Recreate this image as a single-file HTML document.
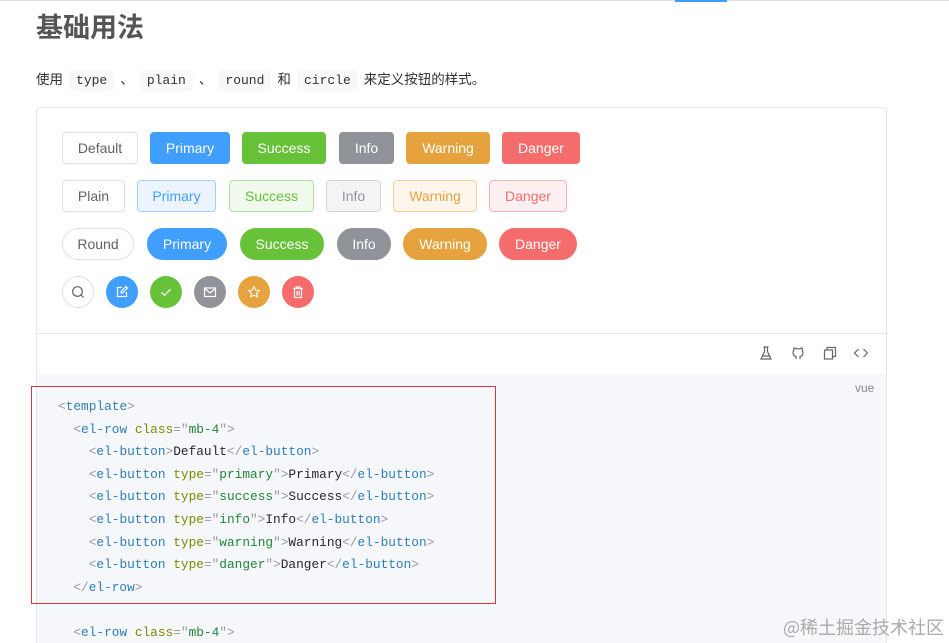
<!DOCTYPE html>
<html style="width:949px;height:643px;overflow:hidden"><head><meta charset="utf-8"><style>
*{box-sizing:border-box;margin:0;padding:0}
body{width:949px;height:643px;overflow:hidden;background:#fff;font-family:"Liberation Sans","Noto Sans CJK SC",sans-serif;position:relative}
.topline{position:absolute;left:0;top:0;width:949px;height:1px;background:#dcdfe6}
.topblue{position:absolute;left:675px;top:0;width:52px;height:2px;background:#409eff}
h1{position:absolute;left:36px;top:6px;font-size:27px;font-weight:700;color:#555;font-family:"Noto Sans CJK SC",sans-serif}
.desc{position:absolute;left:36px;top:66px;font-size:13.5px;color:#303133;font-family:"Noto Sans CJK SC",sans-serif;line-height:24px}
.desc code{font-family:"Liberation Mono",monospace;font-size:13px;background:#f7f8fa;padding:3px 7px;margin:0 3px;border-radius:4px;color:#333}
.box{position:absolute;left:36px;top:107px;width:851px;height:536px;border:1px solid #e4e7ed;border-bottom:none;border-radius:4px 4px 0 0}
.div1{position:absolute;left:37px;top:333px;width:849px;height:1px;background:#e4e7ed}
.code{position:absolute;left:37px;top:374px;width:849px;height:269px;background:#f5f7fa}
.b{position:absolute;height:32px;line-height:30px;font-size:14px;text-align:center;border:1px solid;border-radius:4px;color:#fff}
.c{position:absolute;width:32px;height:32px;border-radius:50%;top:276px;display:flex;align-items:center;justify-content:center}
pre{position:absolute;left:58px;top:396px;font-family:"Liberation Mono",monospace;font-size:12.8px;line-height:22.6px;color:#24292e}
.t{color:#2d7fb8}.p{color:#999}.a{color:#7e8a00}.s{color:#22863a}
.red{position:absolute;left:31px;top:386px;width:465px;height:218px;border:1px solid #d9363e}
.icons{position:absolute;top:345px;color:#666}
.wm{position:absolute;left:783px;top:616px;font-size:18px;line-height:22px;white-space:nowrap;color:#aaa;font-family:"Noto Sans CJK SC",sans-serif}
</style></head><body>
<div class="topline"></div><div class="topblue"></div>
<h1>基础用法</h1>
<div class="desc">使用 <code>type</code> 、 <code>plain</code> 、 <code>round</code> 和 <code>circle</code> 来定义按钮的样式。</div>
<div class="box"></div>
<div class="div1"></div>
<div class="code"></div>

<div class="b" style="left:62px;top:132px;width:76px;border-color:#dcdfe6;color:#606266">Default</div>
<div class="b" style="left:150px;top:132px;width:80px;background:#409eff;border-color:#409eff">Primary</div>
<div class="b" style="left:242px;top:132px;width:84px;background:#67c23a;border-color:#67c23a">Success</div>
<div class="b" style="left:339px;top:132px;width:55px;background:#909399;border-color:#909399">Info</div>
<div class="b" style="left:406px;top:132px;width:84px;background:#e6a23c;border-color:#e6a23c">Warning</div>
<div class="b" style="left:502px;top:132px;width:78px;background:#f56c6c;border-color:#f56c6c">Danger</div>

<div class="b" style="left:62px;top:180px;width:63px;border-color:#dcdfe6;color:#606266">Plain</div>
<div class="b" style="left:137px;top:180px;width:79px;background:#ecf5ff;border-color:#a0cfff;color:#409eff">Primary</div>
<div class="b" style="left:229px;top:180px;width:85px;background:#f0f9eb;border-color:#b3e19d;color:#67c23a">Success</div>
<div class="b" style="left:326px;top:180px;width:55px;background:#f4f4f5;border-color:#d3d4d6;color:#909399">Info</div>
<div class="b" style="left:393px;top:180px;width:84px;background:#fdf6ec;border-color:#f3d19e;color:#e6a23c">Warning</div>
<div class="b" style="left:489px;top:180px;width:78px;background:#fef0f0;border-color:#fab6b6;color:#f56c6c">Danger</div>

<div class="b" style="left:62px;top:228px;width:72px;border-radius:16px;border-color:#dcdfe6;color:#606266">Round</div>
<div class="b" style="left:147px;top:228px;width:80px;border-radius:16px;background:#409eff;border-color:#409eff">Primary</div>
<div class="b" style="left:240px;top:228px;width:84px;border-radius:16px;background:#67c23a;border-color:#67c23a">Success</div>
<div class="b" style="left:337px;top:228px;width:54px;border-radius:16px;background:#909399;border-color:#909399">Info</div>
<div class="b" style="left:403px;top:228px;width:84px;border-radius:16px;background:#e6a23c;border-color:#e6a23c">Warning</div>
<div class="b" style="left:499px;top:228px;width:78px;border-radius:16px;background:#f56c6c;border-color:#f56c6c">Danger</div>

<div class="c" style="left:62px;border:1px solid #dcdfe6"><svg width="14" height="14" viewBox="0 0 14 14" fill="none" stroke="#606266" stroke-width="1.2"><circle cx="6.5" cy="6.5" r="4.8"/><path d="M10 10l2.5 2.5"/></svg></div>
<div class="c" style="left:106px;background:#409eff"><svg width="14" height="14" viewBox="0 0 14 14" fill="none" stroke="#fff" stroke-width="1.2"><path d="M7 2.5H2.5v9h9V7"/><path d="M6 8l.3-1.8L11 1.5l1.5 1.5L7.8 7.7z"/></svg></div>
<div class="c" style="left:150px;background:#67c23a"><svg width="14" height="14" viewBox="0 0 14 14" fill="none" stroke="#fff" stroke-width="1.2"><path d="M2.5 7.3l3 3 6-6"/></svg></div>
<div class="c" style="left:194px;background:#909399"><svg width="14" height="14" viewBox="0 0 14 14" fill="none" stroke="#fff" stroke-width="1.2"><rect x="1.5" y="3" width="11" height="8.5"/><path d="M1.5 3.5L7 8l5.5-4.5"/></svg></div>
<div class="c" style="left:238px;background:#e6a23c"><svg width="14" height="14" viewBox="0 0 14 14" fill="none" stroke="#fff" stroke-width="1.1"><path d="M7 1.5l1.7 3.5 3.8.5-2.8 2.6.7 3.8L7 10.1l-3.4 1.8.7-3.8L1.5 5.5l3.8-.5z"/></svg></div>
<div class="c" style="left:282px;background:#f56c6c"><svg width="14" height="14" viewBox="0 0 14 14" fill="none" stroke="#fff" stroke-width="1.2"><path d="M2 3.5h10M5 3.5V2h4v1.5M3.5 3.5v9h7v-9M6 6v4.5M8 6v4.5"/></svg></div>

<svg class="icons" style="left:758px" width="16" height="16" viewBox="0 0 16 16" fill="none" stroke="#666" stroke-width="1.2"><path d="M5.5 2h5M6.5 2v4.5L3 14h10L9.5 6.5V2M4.5 11h7"/></svg>
<svg class="icons" style="left:790px" width="16" height="16" viewBox="0 0 16 16" fill="none" stroke="#666" stroke-width="1.2"><path d="M6 14v-2.5C4 11 3 10 3 7.5c0-1 .3-1.7.9-2.3-.2-.6-.1-1.5.1-2.2 1 0 1.8.5 2.3.9a7 7 0 013.4 0c.5-.4 1.3-.9 2.3-.9.2.7.3 1.6.1 2.2.6.6.9 1.3.9 2.3 0 2.5-1 3.5-3 4V14"/></svg>
<svg class="icons" style="left:822px" width="16" height="16" viewBox="0 0 16 16" fill="none" stroke="#666" stroke-width="1.2"><rect x="2.5" y="5" width="8" height="9"/><path d="M5 5V2.5h8.5v9H10.5"/></svg>
<svg class="icons" style="left:853px" width="16" height="16" viewBox="0 0 16 16" fill="none" stroke="#666" stroke-width="1.2"><path d="M5.5 4L1.5 8l4 4M10.5 4l4 4-4 4"/></svg>
<div style="position:absolute;left:855px;top:381px;font-size:12px;color:#888">vue</div>

<pre><span class="p">&lt;</span><span class="t">template</span><span class="p">&gt;</span>
  <span class="p">&lt;</span><span class="t">el-row</span> <span class="a">class</span><span class="p">="</span><span class="s">mb-4</span><span class="p">"&gt;</span>
    <span class="p">&lt;</span><span class="t">el-button</span><span class="p">&gt;</span>Default<span class="p">&lt;/</span><span class="t">el-button</span><span class="p">&gt;</span>
    <span class="p">&lt;</span><span class="t">el-button</span> <span class="a">type</span><span class="p">="</span><span class="s">primary</span><span class="p">"&gt;</span>Primary<span class="p">&lt;/</span><span class="t">el-button</span><span class="p">&gt;</span>
    <span class="p">&lt;</span><span class="t">el-button</span> <span class="a">type</span><span class="p">="</span><span class="s">success</span><span class="p">"&gt;</span>Success<span class="p">&lt;/</span><span class="t">el-button</span><span class="p">&gt;</span>
    <span class="p">&lt;</span><span class="t">el-button</span> <span class="a">type</span><span class="p">="</span><span class="s">info</span><span class="p">"&gt;</span>Info<span class="p">&lt;/</span><span class="t">el-button</span><span class="p">&gt;</span>
    <span class="p">&lt;</span><span class="t">el-button</span> <span class="a">type</span><span class="p">="</span><span class="s">warning</span><span class="p">"&gt;</span>Warning<span class="p">&lt;/</span><span class="t">el-button</span><span class="p">&gt;</span>
    <span class="p">&lt;</span><span class="t">el-button</span> <span class="a">type</span><span class="p">="</span><span class="s">danger</span><span class="p">"&gt;</span>Danger<span class="p">&lt;/</span><span class="t">el-button</span><span class="p">&gt;</span>
  <span class="p">&lt;/</span><span class="t">el-row</span><span class="p">&gt;</span>

  <span class="p">&lt;</span><span class="t">el-row</span> <span class="a">class</span><span class="p">="</span><span class="s">mb-4</span><span class="p">"&gt;</span></pre>
<div class="red"></div>
<div class="wm">@稀土掘金技术社区</div>
</body></html>
